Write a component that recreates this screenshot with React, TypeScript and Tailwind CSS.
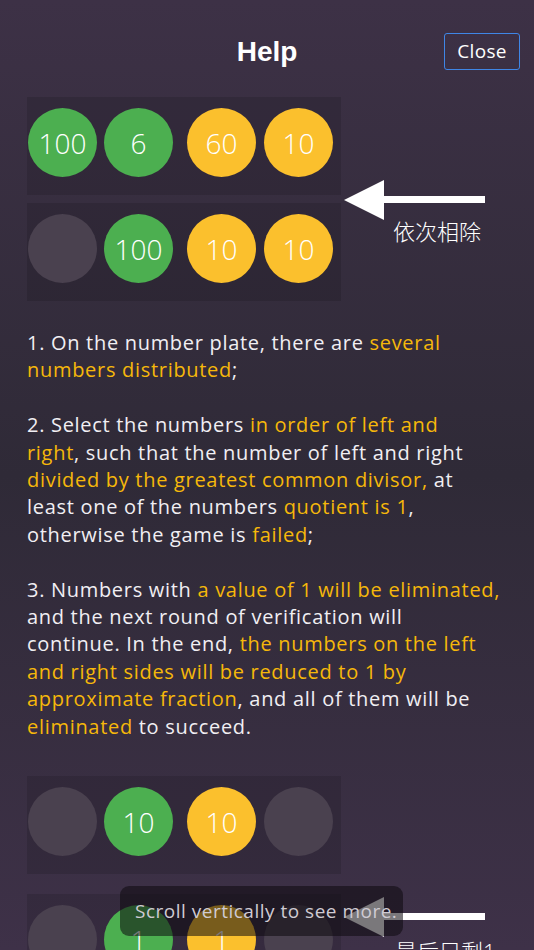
import React from "react";

type Ball = { value?: number; color: "green" | "yellow" | "empty" };

const ballColor = (c: Ball["color"]) => {
  switch (c) {
    case "green":
      return "bg-[#4caf50]";
    case "yellow":
      return "bg-[#fbc02d]";
    default:
      return "bg-[#4a414f]";
  }
};

// spacing between the four balls on a plate (green pair, yellow pair)
const ballGap = ["ml-[1px]", "ml-[7px]", "ml-[14px]", "ml-[8px]"];

const Plate = ({ balls, className = "" }: { balls: Ball[]; className?: string }) => (
  <div className={`w-[314px] h-[98px] pt-[11px] bg-black/[0.12] flex items-start ${className}`}>
    {balls.map((b, i) => (
      <div
        key={i}
        className={`w-[69px] h-[69px] rounded-full flex items-center justify-center text-white text-[28px] font-light ${ballColor(
          b.color
        )} ${ballGap[i]}`}
      >
        {b.value ?? ""}
      </div>
    ))}
  </div>
);

const LeftArrow = () => (
  <svg width="141" height="40" viewBox="0 0 141 40">
    <polygon points="0,20 40,0 40,16 141,16 141,23 40,23 40,40" fill="#ffffff" />
  </svg>
);

const Hl = ({ children }: { children: React.ReactNode }) => (
  <span className="text-[#f6b80a]">{children}</span>
);

export default function App() {
  return (
    <div
      className="relative h-[950px] overflow-hidden bg-gradient-to-b from-[#3d3146] via-[#2f2a37] to-[#3e3148] text-[#f1eff3]"
      style={{ fontFamily: '"Open Sans", "Noto Sans CJK SC", sans-serif' }}
    >
      {/* Header */}
      <div className="grid grid-cols-[1fr_auto_1fr] items-center pt-[33px]">
        <div />
        <h1
          className="text-[28px] font-bold text-white leading-[37px]"
          style={{ fontFamily: '"Liberation Sans", sans-serif' }}
        >
          Help
        </h1>
        <div className="flex justify-end pr-[14px]">
          <button className="w-[76px] h-[37px] border-[1.5px] border-[#3f86e6] rounded-[3px] text-[19px] tracking-[0.3px] text-white">
            Close
          </button>
        </div>
      </div>

      {/* Top example */}
      <div className="flex px-[27px] mt-[27px]">
        <div className="flex flex-col">
          <Plate
            balls={[
              { value: 100, color: "green" },
              { value: 6, color: "green" },
              { value: 60, color: "yellow" },
              { value: 10, color: "yellow" },
            ]}
          />
          <Plate
            className="mt-[8px]"
            balls={[
              { color: "empty" },
              { value: 100, color: "green" },
              { value: 10, color: "yellow" },
              { value: 10, color: "yellow" },
            ]}
          />
        </div>
        <div className="ml-[3px] mt-[83px] flex flex-col">
          <LeftArrow />
          <span className="ml-[49px] -mt-[3px] text-[22px] leading-[28px] text-white font-light">依次相除</span>
        </div>
      </div>

      {/* Rules */}
      <div className="px-[27px] mt-[28px] text-[20px] leading-[27.4px] tracking-[0.7px] whitespace-nowrap">
        <p>
          1. On the number plate, there are <Hl>several</Hl>
          <br />
          <Hl>numbers distributed</Hl>;
        </p>
        <p className="mt-[27.4px]">
          2. Select the numbers <Hl>in order of left and</Hl>
          <br />
          <Hl>right</Hl>, such that the number of left and right
          <br />
          <Hl>divided by the greatest common divisor,</Hl> at
          <br />
          least one of the numbers <Hl>quotient is 1</Hl>,
          <br />
          otherwise the game is <Hl>failed</Hl>;
        </p>
        <p className="mt-[27.4px]">
          3. Numbers with <Hl>a value of 1 will be eliminated,</Hl>
          <br />
          and the next round of verification will
          <br />
          continue. In the end, <Hl>the numbers on the left</Hl>
          <br />
          <Hl>and right sides will be reduced to 1 by</Hl>
          <br />
          <Hl>approximate fraction</Hl>, and all of them will be
          <br />
          <Hl>eliminated</Hl> to succeed.
        </p>
      </div>

      {/* Bottom example */}
      <div className="flex px-[27px] mt-[36px]">
        <div className="flex flex-col">
          <Plate
            balls={[
              { color: "empty" },
              { value: 10, color: "green" },
              { value: 10, color: "yellow" },
              { color: "empty" },
            ]}
          />
          <Plate
            className="mt-[20px]"
            balls={[
              { color: "empty" },
              { value: 1, color: "green" },
              { value: 1, color: "yellow" },
              { color: "empty" },
            ]}
          />
        </div>
        <div className="ml-[3px] mt-[121px] flex flex-col">
          <LeftArrow />
          <span className="ml-[51px] mt-[0px] text-[22px] leading-[28px] text-white font-light">最后只剩1</span>
        </div>
      </div>

      {/* Toast */}
      <div className="absolute left-[120px] top-[886px] w-[283px] h-[50px] rounded-[9px] bg-[#0d0a0f]/55 flex items-center pl-[15px]">
        <span className="text-[19px] tracking-[0.5px] text-[#cfcbd3]">Scroll vertically to see more.</span>
      </div>
    </div>
  );
}
